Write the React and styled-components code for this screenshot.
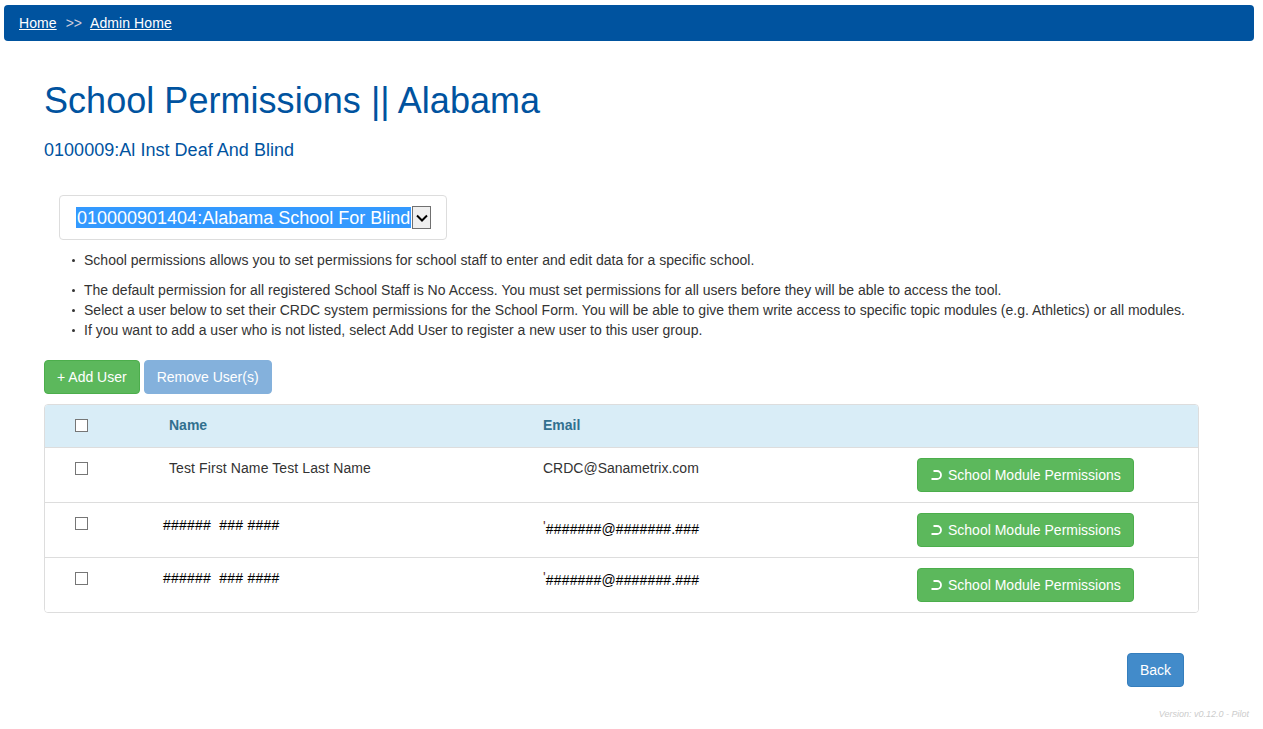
import React from "react"
import styled, { createGlobalStyle } from "styled-components"

const Global = createGlobalStyle`
  html, body { margin: 0; padding: 0; background: #fff; }
  body { font-family: "Liberation Sans", Arial, sans-serif; font-size: 14px; line-height: 20px; color: #333; }
  * { box-sizing: border-box; }
`

const Page = styled.div`
  position: relative;
  height: 729px;
  padding: 5px 9px 0 4px;
`

const NavBar = styled.nav`
  display: flex;
  align-items: center;
  height: 36px;
  padding-left: 15px;
  background: #00539f;
  border-radius: 4px;
`

const NavLink = styled.a`
  color: #fff;
  letter-spacing: 0.08px;
  text-decoration: underline;
`

const NavSep = styled.span`
  margin: 0 8px 0 9px;
  color: #ccd;
`

const Main = styled.main`
  padding: 0 55px 0 40px;
`

const Title = styled.h1`
  margin: 38px 0 0;
  font-size: 36px;
  font-weight: 400;
  line-height: 44px;
  letter-spacing: 0.04px;
  color: #00539f;
`

const SubTitle = styled.h2`
  margin: 17px 0 0;
  font-size: 18px;
  font-weight: 400;
  line-height: 20px;
  letter-spacing: 0.03px;
  color: #00539f;
`

const SelectBox = styled.div`
  display: flex;
  align-items: center;
  width: 388px;
  height: 45px;
  margin: 35px 0 0 15px;
  padding-left: 16px;
  border: 1px solid #ddd;
  border-radius: 4px;
`

const SelectValue = styled.span`
  height: 21px;
  padding: 0 1px;
  font-size: 18px;
  line-height: 23px;
  white-space: nowrap;
  color: #fff;
  background: #3399ff;
`

const SelectArrow = styled.span`
  display: flex;
  align-items: center;
  justify-content: center;
  width: 19px;
  height: 23px;
  margin-left: 1px;
  background: #efefef;
  border: 1px solid #707070;
`

const Notes = styled.ul`
  margin: 10px 0 0;
  padding: 0 0 0 40px;
  font-size: 14px;
  letter-spacing: 0.012px;
  list-style: none;
`

const Note = styled.li`
  position: relative;
  margin-bottom: ${(p) => p.$gap || 0}px;

  &::before {
    content: "";
    position: absolute;
    left: -12px;
    top: 9px;
    width: 3px;
    height: 3px;
    border-radius: 50%;
    background: #333;
  }
`

const Toolbar = styled.div`
  display: flex;
  gap: 4px;
  margin-top: 20px;
`

const Button = styled.button`
  display: inline-flex;
  align-items: center;
  justify-content: center;
  gap: 5px;
  height: 34px;
  padding: 0 12px;
  font: inherit;
  color: #fff;
  background: ${(p) => (p.$tone === "green" ? "#5cb85c" : p.$tone === "faded" ? "#84b1dc" : "#428bca")};
  border: 1px solid ${(p) => (p.$tone === "green" ? "#4cae4c" : p.$tone === "faded" ? "#84b1dc" : "#357ebd")};
  border-radius: 4px;
`

const Table = styled.div`
  margin-top: 10px;
  border: 1px solid #ddd;
  border-radius: 4px;
`

const Row = styled.div`
  display: grid;
  grid-template-columns: 124px 374px 374px 1fr;
  height: ${(p) => (p.$head ? 42 : 55)}px;
  padding-top: 10px;
  background: ${(p) => (p.$head ? "#d9edf7" : "#fff")};
  border-top: ${(p) => (p.$first ? "none" : "1px solid #ddd")};
  border-radius: ${(p) => (p.$head ? "3px 3px 0 0" : p.$last ? "0 0 3px 3px" : "0")};
  font-weight: ${(p) => (p.$head ? 700 : 400)};
  color: ${(p) => (p.$head ? "#31708f" : "#333")};
`

const CheckCell = styled.div`
  padding-left: 30px;
`

const Check = styled.span`
  display: block;
  width: 13px;
  height: 13px;
  margin-top: 4px;
  background: #fff;
  border: 1px solid #767676;
`

const PlainText = styled.div`
  letter-spacing: ${(p) => p.$spacing || 0}px;
`

const Masked = styled.div`
  margin: ${(p) => p.$drop || 0}px 0 0 ${(p) => p.$shift || 0}px;
  white-space: pre;
  letter-spacing: ${(p) => p.$spacing}px;
  color: #000;
`

const Tick = styled.span`
  vertical-align: 3px;
  color: #633;
`

const Footer = styled.div`
  display: flex;
  justify-content: flex-end;
  margin-top: 40px;
  padding-right: 15px;
`

const Version = styled.div`
  position: absolute;
  right: 14px;
  top: 708px;
  font-size: 9px;
  line-height: 12px;
  font-style: italic;
  color: #ccc;
`

const SyncIcon = () => (
  <svg width="13" height="10" viewBox="0 0 13 10" fill="none" stroke="#fff" strokeWidth="1.8">
    <path d="M3.5 1H7a4 4 0 0 1 0 8H1.5" />
  </svg>
)

const users = [
  { name: "Test First Name Test Last Name", email: "CRDC@Sanametrix.com" },
  { name: "######  ### ####", email: "#######@#######.###", masked: true, nameDrop: 2, mailDrop: 3 },
  { name: "######  ### ####", email: "#######@#######.###", masked: true, nameDrop: 0, mailDrop: -1 },
]

export default function App() {
  return (
    <Page>
      <Global />
      <NavBar>
        <NavLink href="#">Home</NavLink>
        <NavSep>&gt;&gt;</NavSep>
        <NavLink href="#">Admin Home</NavLink>
      </NavBar>
      <Main>
        <Title>School Permissions || Alabama</Title>
        <SubTitle>0100009:Al Inst Deaf And Blind</SubTitle>
        <SelectBox>
          <SelectValue>010000901404:Alabama School For Blind</SelectValue>
          <SelectArrow>
            <svg width="12" height="8" viewBox="0 0 12 8" fill="none" stroke="#000" strokeWidth="2">
              <path d="M1 1.5l5 5 5-5" />
            </svg>
          </SelectArrow>
        </SelectBox>
        <Notes>
          <Note $gap={10}>School permissions allows you to set permissions for school staff to enter and edit data for a specific school.</Note>
          <Note>The default permission for all registered School Staff is No Access. You must set permissions for all users before they will be able to access the tool.</Note>
          <Note>Select a user below to set their CRDC system permissions for the School Form. You will be able to give them write access to specific topic modules (e.g. Athletics) or all modules.</Note>
          <Note>If you want to add a user who is not listed, select Add User to register a new user to this user group.</Note>
        </Notes>
        <Toolbar>
          <Button $tone="green">+ Add User</Button>
          <Button $tone="faded">Remove User(s)</Button>
        </Toolbar>
        <Table>
          <Row $head $first>
            <CheckCell><Check /></CheckCell>
            <div>Name</div>
            <div>Email</div>
            <div />
          </Row>
          {users.map((u, i) => (
            <Row key={i} $last={i === users.length - 1}>
              <CheckCell><Check /></CheckCell>
              {u.masked ? <Masked $shift={-6} $drop={u.nameDrop} $spacing={0.22}>{u.name}</Masked> : <PlainText $spacing={0.1}>{u.name}</PlainText>}
              {u.masked ? <Masked $drop={u.mailDrop} $spacing={0.15}><Tick>'</Tick>{u.email}</Masked> : <PlainText>{u.email}</PlainText>}
              <div>
                <Button $tone="green"><SyncIcon />School Module Permissions</Button>
              </div>
            </Row>
          ))}
        </Table>
        <Footer>
          <Button $tone="blue">Back</Button>
        </Footer>
      </Main>
      <Version>Version: v0.12.0 - Pilot</Version>
    </Page>
  )
}
